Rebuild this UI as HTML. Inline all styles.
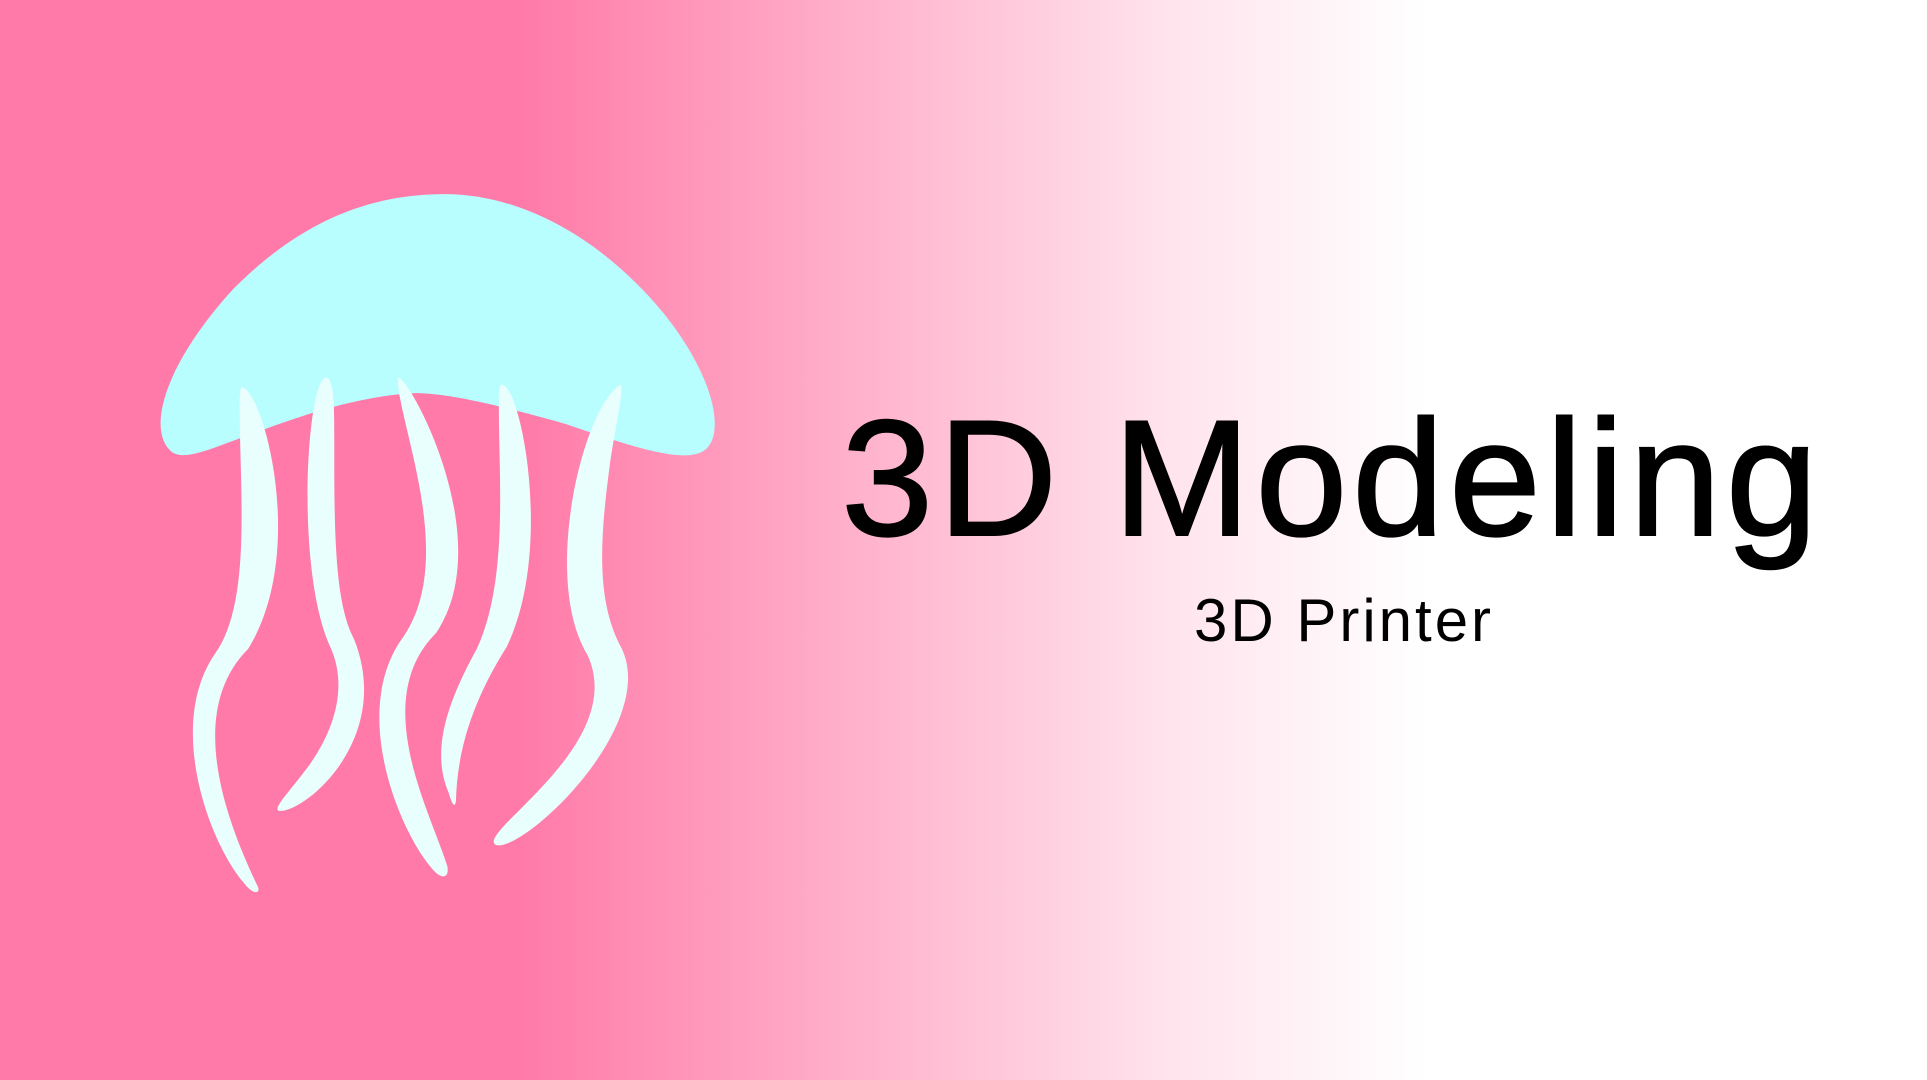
<!DOCTYPE html>
<html><head><meta charset="utf-8"><style>
html,body{margin:0;padding:0;}
body{width:1927px;height:1080px;position:relative;overflow:hidden;
background:linear-gradient(90deg,#ff7aa8 0%,#ff7aa8 27%,#ffb3cc 45%,#ffe2ec 60%,#ffffff 74%,#ffffff 100%);
font-family:"Liberation Sans",Arial,sans-serif;}
svg{position:absolute;left:0;top:0;}
.t{position:absolute;white-space:nowrap;text-align:center;color:#000;line-height:1;}
</style></head><body>
<svg width="1927" height="1080" viewBox="0 0 1568 879" preserveAspectRatio="none">
<path fill="#b8feff" d="M140 368 C118 350,135 295,190 235 C245 180,300 158,362 158 C430 158,495 200,540 255 C580 305,590 350,575 365 C560 380,510 362,460 345 C400 328,362 320,338 320 C290 322,240 340,200 355 C170 366,150 375,140 368 Z"/>
<g fill="#e9fffe">
<path d="M197 315 C215 320,250 450,202 528 C150 580,185 670,210 722 C212 728,205 728,198 718 C170 685,135 590,175 532 C205 490,195 400,195 330 C195 318,196 314,197 315 Z"/>
<path d="M265 307 C272 308,272 330,272 360 C272 430,272 490,288 520 C320 600,250 660,228 660 C220 660,235 645,250 625 C270 598,285 560,268 525 C240 460,250 310,265 307 Z"/>
<path d="M324 307 C335 310,405 440,355 515 C300 570,350 660,364 705 C366 716,358 716,350 705 C325 675,285 580,327 520 C370 460,330 360,324 315 Z"/>
<path d="M409 313 C425 318,450 450,412 527 C385 570,372 610,371 652 C370 658,368 655,365 645 C350 610,365 570,388 528 C415 470,405 380,406 325 C406 315,407 312,409 313 Z"/>
<path d="M505 313 C508 318,500 350,496 380 C488 440,485 490,506 528 C535 590,430 690,405 688 C395 686,410 672,425 657 C455 627,500 580,478 533 C440 470,475 330,505 313 Z"/>
</g>
</svg>
<div class="t" style="left:832px;width:1000px;top:396px;font-size:165px;letter-spacing:5px;-webkit-text-stroke:2px #000;">3D Modeling</div>
<div class="t" style="left:1144px;width:400px;top:591px;font-size:60px;letter-spacing:3px;">3D Printer</div>
</body></html>
